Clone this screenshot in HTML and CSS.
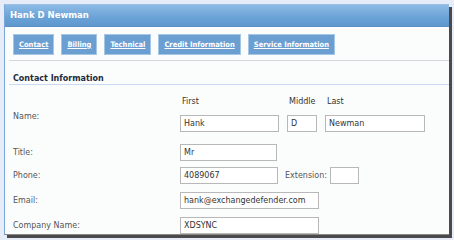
FILE: index.html
```html
<!DOCTYPE html>
<html lang="en">
<head>
    <meta charset="UTF-8">
    <title>Hank D Newman</title>
    <link rel="stylesheet" href="styles.css">
</head>
<body>
    <div class="window">
        <!-- Title bar -->
        <div class="titlebar">Hank D Newman</div>

        <div class="content">
            <!-- Tabs -->
            <div class="tabs">
                <a class="tab" href="#">Contact</a>
                <a class="tab" href="#">Billing</a>
                <a class="tab" href="#">Technical</a>
                <a class="tab" href="#">Credit Information</a>
                <a class="tab" href="#">Service Information</a>
            </div>

            <div class="section">
                <h3 class="section-title">Contact Information</h3>

                <div class="row row-name">
                    <label class="label">Name:</label>
                    <div class="name-parts">
                        <div class="part">
                            <span class="sub">First</span>
                            <input class="input w-first" type="text" value="Hank">
                        </div>
                        <div class="part">
                            <span class="sub">Middle</span>
                            <input class="input w-middle" type="text" value="D">
                        </div>
                        <div class="part">
                            <span class="sub">Last</span>
                            <input class="input w-last" type="text" value="Newman">
                        </div>
                    </div>
                </div>

                <div class="row row-title">
                    <label class="label">Title:</label>
                    <input class="input w-title" type="text" value="Mr">
                </div>

                <div class="row row-phone">
                    <label class="label">Phone:</label>
                    <input class="input w-phone" type="text" value="4089067">
                    <label class="ext-label">Extension:</label>
                    <input class="input w-ext" type="text" value="">
                </div>

                <div class="row row-email">
                    <label class="label">Email:</label>
                    <input class="input w-email" type="text" value="hank@exchangedefender.com">
                </div>

                <div class="row row-company">
                    <label class="label">Company Name:</label>
                    <input class="input w-email" type="text" value="XDSYNC">
                </div>
            </div>
        </div>
    </div>
</body>
</html>
```

FILE: styles.css
```css
html, body {
    height: 100%;
}

body {
    margin: 0;
    background-color: #e6ecf8;
    font-family: "DejaVu Sans", Verdana, sans-serif;
    font-size: 8px;
    color: #555;
    overflow: hidden;
}

.window {
    margin: 4px 0 0 4px;
    width: 444px;
    height: 229px;
    border-left: 1px solid #7aa7d6;
    border-top: 1px solid #9dbfe4;
    border-bottom: 1px solid #888;
    background-color: #fbfdfd;
    box-shadow: 3px 3px 0 #4a4a4a;
    overflow: hidden;
}

.titlebar {
    height: 21px;
    line-height: 21px;
    padding-left: 5px;
    background: linear-gradient(#8dbbe5, #6aa2d6 60%, #5e98cf);
    border-bottom: 1px solid #5a8fc4;
    color: #fff;
    font-weight: bold;
    font-size: 8.5px;
}

.content {
    padding: 7px 0 0 8px;
}

/* Tabs */
.tabs {
    display: flex;
    gap: 7px;
    height: 21px;
}

.tab {
    display: block;
    padding: 0 5px;
    line-height: 19px;
    background-color: #6b9fd2;
    border: 1px solid #a6c6e8;
    color: #fff;
    font-weight: bold;
    font-size: 7.5px;
    font-family: "DejaVu Sans Condensed", "DejaVu Sans", sans-serif;
}

.section {
    margin: 5px 0 0 -4px;
    padding-left: 4px;
    border-top: 1px solid #d4d8dc;
}

.section-title {
    margin: 0 0 0 -4px;
    padding: 13px 0 0 4px;
    height: 10px;
    line-height: 10px;
    color: #1e2a3a;
    font-size: 8px;
    border-bottom: 1px solid #c8dbf2;
}

/* Form rows */
.row {
    display: flex;
    align-items: center;
}

.label {
    width: 167px;
    flex-shrink: 0;
}

.row-name {
    margin-top: 12px;
    align-items: flex-end;
}

.row-name .label {
    padding-bottom: 11px;
}

.name-parts {
    display: flex;
    gap: 8px;
}

.part {
    display: flex;
    flex-direction: column;
}

.sub {
    height: 12px;
    padding-left: 2px;
    margin-bottom: 6px;
    color: #333;
}

.input {
    box-sizing: border-box;
    height: 17px;
    border: 1px solid #b8b8b8;
    background: #fff;
    padding: 0 3px;
    font-family: "DejaVu Sans", Verdana, sans-serif;
    font-size: 8px;
    color: #333;
}

.w-first { width: 99px; }
.w-middle { width: 30px; }
.w-last { width: 100px; }
.w-title { width: 97px; }
.w-phone { width: 98px; }
.w-ext { width: 29px; }
.w-email { width: 139px; }

.row-title { margin-top: 12px; }
.row-phone { margin-top: 6px; }
.row-email { margin-top: 8px; }
.row-company { margin-top: 8px; }

.ext-label {
    margin: 0 3px 0 7px;
}
```
